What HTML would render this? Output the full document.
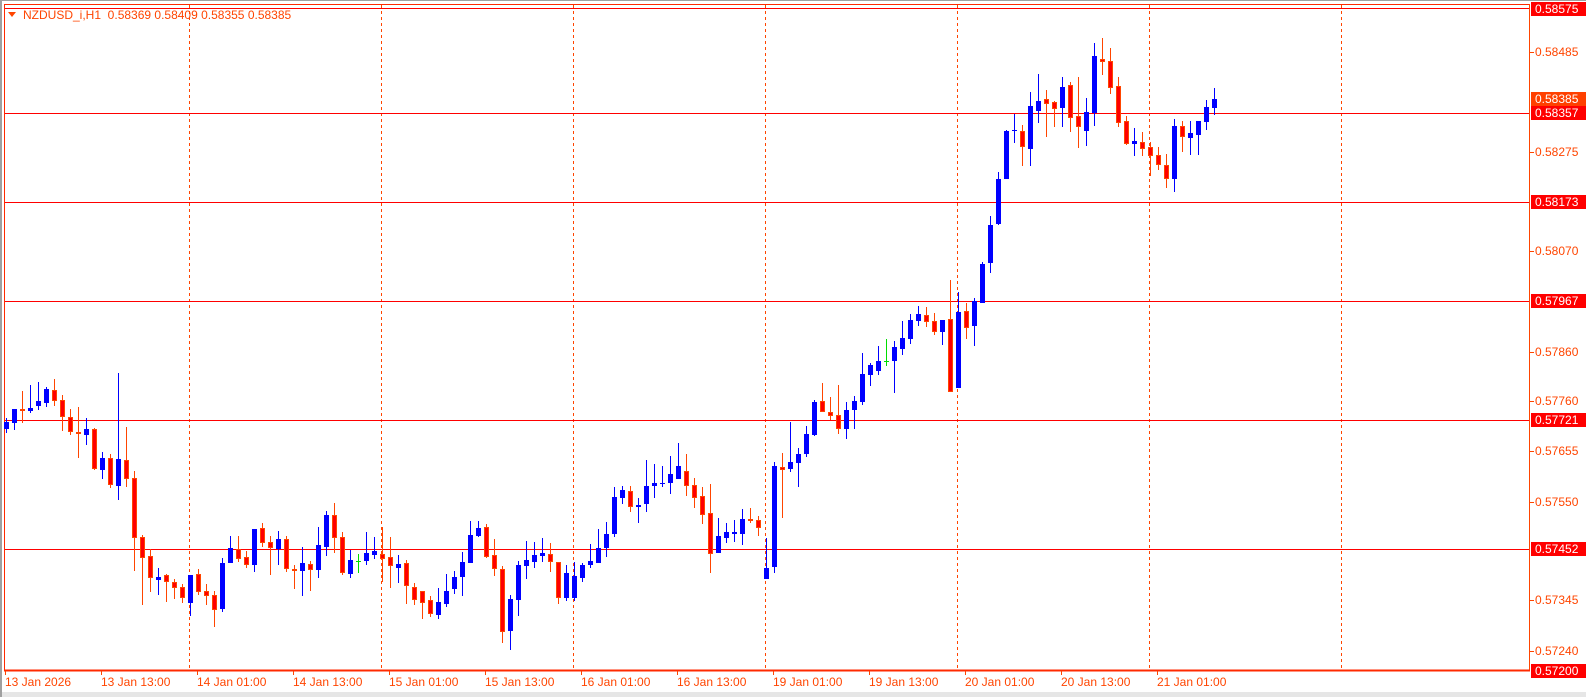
<!DOCTYPE html>
<html><head><meta charset="utf-8">
<style>
html,body{margin:0;padding:0;background:#fff;}
body{width:1586px;height:697px;overflow:hidden;position:relative;font-family:"Liberation Sans",sans-serif;}
svg{position:absolute;left:0;top:0;}
</style></head>
<body>
<svg id="c" width="1586" height="697" xmlns="http://www.w3.org/2000/svg" font-family="Liberation Sans, sans-serif" font-size="12">
<rect x="0" y="0" width="1586" height="697" fill="#fff"/>
<rect x="0" y="692" width="1586" height="5" fill="#e6e6e6"/>
<rect x="0" y="0" width="2" height="697" fill="#a0a0a0"/>
<rect x="0" y="0" width="1586" height="1" fill="#a0a0a0"/>
<line x1="4.5" y1="4" x2="4.5" y2="671" stroke="#ff2a00" stroke-width="1"/>
<line x1="4" y1="4.5" x2="1529" y2="4.5" stroke="#ff2a00"/>
<line x1="1529.5" y1="4" x2="1529.5" y2="671" stroke="#ff4500"/>
<line x1="4" y1="670.5" x2="1530" y2="670.5" stroke="#ff2a00" stroke-width="2"/>
<g id="grid"></g>
<g id="cand"></g>
<g id="axis"></g>
<polygon points="8,12 16,12 12,17" fill="#ff4500"/>
<text x="23" y="19" fill="#ff4500">NZDUSD_i,H1&#160;&#160;0.58369 0.58409 0.58355 0.58385</text>
</svg>
<script>
var NS="http://www.w3.org/2000/svg";
function el(p,t,a,txt){var e=document.createElementNS(NS,t);for(var k in a)e.setAttribute(k,a[k]);if(txt!=null)e.textContent=txt;p.appendChild(e);return e;}
var grid=document.getElementById('grid'),cand=document.getElementById('cand'),axis=document.getElementById('axis');
[189,381,573,765,957,1149,1341].forEach(function(x){el(grid,'line',{x1:x+.5,y1:5,x2:x+.5,y2:669,stroke:'#ff4500','stroke-dasharray':'3,3'});});
[8,113,202,301,420,549].forEach(function(y){el(grid,'line',{x1:5,y1:y+.5,x2:1529,y2:y+.5,stroke:'#ff0000'});});
var D=[
[418,433,422,429,'b'],[409,430,409,423,'b'],[391,423,409,411,'r'],[385,413,408,411,'b'],[382,410,401,406,'b'],
[387,407,389,403,'b'],[379,406,390,401,'r'],[395,431,400,417,'r'],[409,435,417,432,'r'],[407,458,432,434,'r'],
[418,445,429,435,'b'],[428,470,429,469,'r'],[452,479,458,470,'b'],[454,488,458,485,'r'],[373,500,459,486,'b'],
[427,487,460,479,'r'],[471,571,478,538,'r'],[535,605,537,558,'r'],[549,592,556,578,'r'],[568,595,577,580,'b'],
[574,602,575,582,'r'],[579,599,582,588,'r'],[584,603,587,598,'r'],[575,616,575,603,'b'],[569,595,574,592,'r'],
[584,605,591,596,'r'],[591,627,595,610,'r'],[558,612,563,609,'b'],[536,563,548,563,'b'],[536,562,549,559,'r'],
[551,568,557,565,'r'],[529,572,529,565,'b'],[523,547,528,543,'r'],[536,575,542,548,'r'],[531,565,539,549,'b'],
[536,572,539,569,'r'],[565,589,569,571,'r'],[547,596,563,571,'b'],[561,591,564,570,'r'],[527,578,545,570,'b'],
[511,556,515,547,'b'],[503,553,515,538,'r'],[532,575,537,573,'r'],[550,578,560,574,'b'],[554,573,561,561,'g'],
[532,565,553,561,'b'],[537,559,551,555,'b'],[527,582,554,559,'r'],[537,588,557,566,'r'],[555,583,564,568,'b'],
[560,604,563,586,'r'],[583,605,587,600,'r'],[592,619,591,603,'r'],[596,617,600,614,'r'],[588,619,602,615,'b'],
[574,607,591,604,'b'],[571,594,577,589,'b'],[552,596,562,577,'b'],[521,563,535,563,'b'],[521,537,528,536,'b'],
[524,558,527,557,'r'],[539,576,555,569,'r'],[566,643,569,632,'r'],[595,650,599,631,'b'],[561,616,565,600,'b'],
[541,579,560,566,'b'],[542,568,555,562,'b'],[538,562,553,556,'b'],[543,572,554,562,'r'],[562,604,562,598,'r'],
[565,601,573,598,'b'],[562,601,576,598,'b'],[563,582,565,578,'b'],[544,568,561,565,'b'],[529,563,548,563,'b'],
[522,557,534,548,'b'],[487,537,497,534,'b'],[486,504,490,498,'b'],[486,512,491,507,'r'],[498,523,505,507,'b'],
[460,512,486,504,'b'],[464,498,483,486,'b'],[466,487,483,484,'b'],[456,494,474,483,'b'],[443,479,466,479,'b'],
[454,496,471,486,'r'],[478,508,485,498,'r'],[487,524,496,515,'r'],[484,573,513,554,'r'],[518,553,536,553,'b'],
[523,543,532,538,'b'],[520,542,532,534,'b'],[509,545,519,534,'b'],[508,523,519,521,'r'],[516,536,520,528,'r'],
[538,579,568,579,'b'],[462,573,466,567,'b'],[453,518,467,470,'r'],[422,472,462,469,'b'],[448,487,454,463,'b'],
[426,457,434,454,'b'],[400,436,402,435,'b'],[383,412,401,412,'r'],[397,420,412,416,'r'],[385,434,415,429,'r'],
[402,439,410,429,'b'],[396,429,401,410,'b'],[353,405,374,402,'b'],[363,386,365,375,'b'],[346,375,361,371,'b'],
[339,366,361,361,'g'],[341,393,347,361,'b'],[321,355,338,349,'b'],[314,344,320,339,'b'],[306,326,314,321,'b'],
[307,327,315,322,'r'],[313,335,321,332,'r'],[320,345,320,332,'b'],[280,392,319,392,'r'],[292,388,312,388,'b'],
[303,339,311,328,'r'],[298,346,301,326,'b'],[262,303,264,303,'b'],[216,273,225,263,'b'],[172,225,179,224,'b'],
[130,179,131,179,'b'],[114,143,130,131,'b'],[125,166,131,147,'r'],[92,166,106,149,'b'],[74,123,101,111,'b'],
[90,137,99,104,'r'],[101,127,102,109,'r'],[77,127,87,108,'b'],[82,132,85,118,'r'],[77,148,116,127,'r'],
[98,146,112,131,'b'],[43,126,56,113,'b'],[38,75,59,62,'r'],[48,94,61,88,'r'],[77,127,86,123,'r'],
[116,145,121,144,'r'],[128,156,141,144,'b'],[132,156,142,149,'r'],[142,176,147,156,'r'],[147,170,155,165,'r'],
[154,188,165,179,'r'],[119,192,126,179,'b'],[121,152,126,137,'r'],[121,155,133,138,'b'],[121,155,121,135,'b'],
[100,130,107,122,'b'],[88,115,99,108,'b']
];
D.forEach(function(d,i){
  var cx=6+8*i,t=d[4];
  var wc=t=='b'?'#0000ff':(t=='g'?'#00dd00':'#ff4500');
  el(cand,'rect',{x:cx,y:d[0],width:1,height:d[1]-d[0],fill:wc});
  var h=d[3]-d[2];
  if(t=='g'||h<1){el(cand,'rect',{x:cx-2,y:d[2],width:5,height:1,fill:wc});}
  else if(t=='b'){el(cand,'rect',{x:cx-2,y:d[2],width:5,height:h,fill:'#0000ff'});}
  else {el(cand,'rect',{x:cx-2,y:d[2],width:5,height:h,fill:'#ff4500'});
        if(h>2)el(cand,'rect',{x:cx-1,y:d[2]+1,width:3,height:h-2,fill:'#ff0000'});}
});
var P=[['0.58575',9,'box'],['0.58485',52],['0.58385',99,'obox'],['0.58357',113,'box'],['0.58275',152],['0.58173',202,'box'],
['0.58070',251],['0.57967',301,'box'],['0.57860',352],['0.57760',401],['0.57721',420,'box'],['0.57655',451],['0.57550',502],
['0.57452',549,'box'],['0.57345',600],['0.57240',651],['0.57200',671,'box']];
P.forEach(function(p){
  var y=p[1];
  if(p[2]){el(axis,'rect',{x:1531,y:y-7,width:55,height:14,fill:p[2]=='box'?'#ff0000':'#ff4000'});
    el(axis,'text',{x:1535,y:y+4,fill:'#fff'},p[0]);}
  else{el(axis,'rect',{x:1530,y:y,width:4,height:1,fill:'#ff4500'});
    el(axis,'text',{x:1535,y:y+4,fill:'#ff4500'},p[0]);}
});
var L=['13 Jan 2026','13 Jan 13:00','14 Jan 01:00','14 Jan 13:00','15 Jan 01:00','15 Jan 13:00','16 Jan 01:00','16 Jan 13:00','19 Jan 01:00','19 Jan 13:00','20 Jan 01:00','20 Jan 13:00','21 Jan 01:00'];
L.forEach(function(s,k){var x=5+96*k;
  el(axis,'rect',{x:x,y:671,width:1,height:4,fill:'#ff4500'});
  el(axis,'text',{x:x,y:686,fill:'#ff4500'},s);});
</script>
</body></html>
